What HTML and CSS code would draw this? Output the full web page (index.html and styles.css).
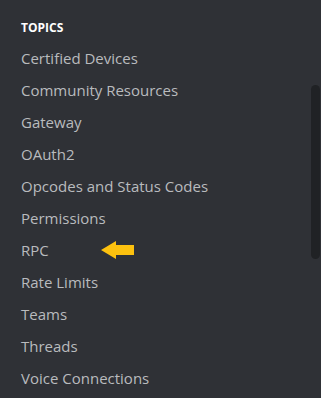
FILE: index.html
```html
<!DOCTYPE html>
<html lang="en">
<head>
    <meta charset="UTF-8">
    <title>Topics</title>
    <link rel="stylesheet" href="styles.css">
</head>
<body>
    <nav class="sidebar">
        <h2 class="heading">Topics</h2>
        <ul class="links">
            <li>Certified Devices</li>
            <li>Community Resources</li>
            <li>Gateway</li>
            <li>OAuth2</li>
            <li>Opcodes and Status Codes</li>
            <li>Permissions</li>
            <li class="marked">RPC
                <svg class="arrow" width="33" height="18" viewBox="0 0 33 18">
                    <path d="M0 9 L15 0 L15 4 L33 4 L33 14 L15 14 L15 18 Z" fill="#fcc10f"/>
                </svg>
            </li>
            <li>Rate Limits</li>
            <li>Teams</li>
            <li>Threads</li>
            <li>Voice Connections</li>
        </ul>
        <div class="scroll-thumb"></div>
    </nav>
</body>
</html>
```

FILE: styles.css
```css
html, body {
    margin: 0;
    height: 100%;
}
body {
    background-color: #2f3136;
    font-family: 'Open Sans', sans-serif;
    overflow: hidden;
}
.sidebar {
    position: relative;
    height: 100%;
    padding: 20px 0 0 21px;
    box-sizing: border-box;
}
.heading {
    margin: 0 0 6px;
    font-size: 12px;
    font-weight: 700;
    text-transform: uppercase;
    color: #ffffff;
    line-height: 16px;
}
.links {
    list-style: none;
    margin: 0;
    padding: 0;
}
.links li {
    font-size: 15px;
    line-height: 32px;
    color: #b9bbbe;
    display: flex;
    align-items: center;
}
.arrow {
    margin-left: 52px;
}
.scroll-thumb {
    position: absolute;
    top: 85px;
    right: 1px;
    width: 9px;
    height: 174px;
    background-color: #202225;
    border-radius: 5px;
}
```
